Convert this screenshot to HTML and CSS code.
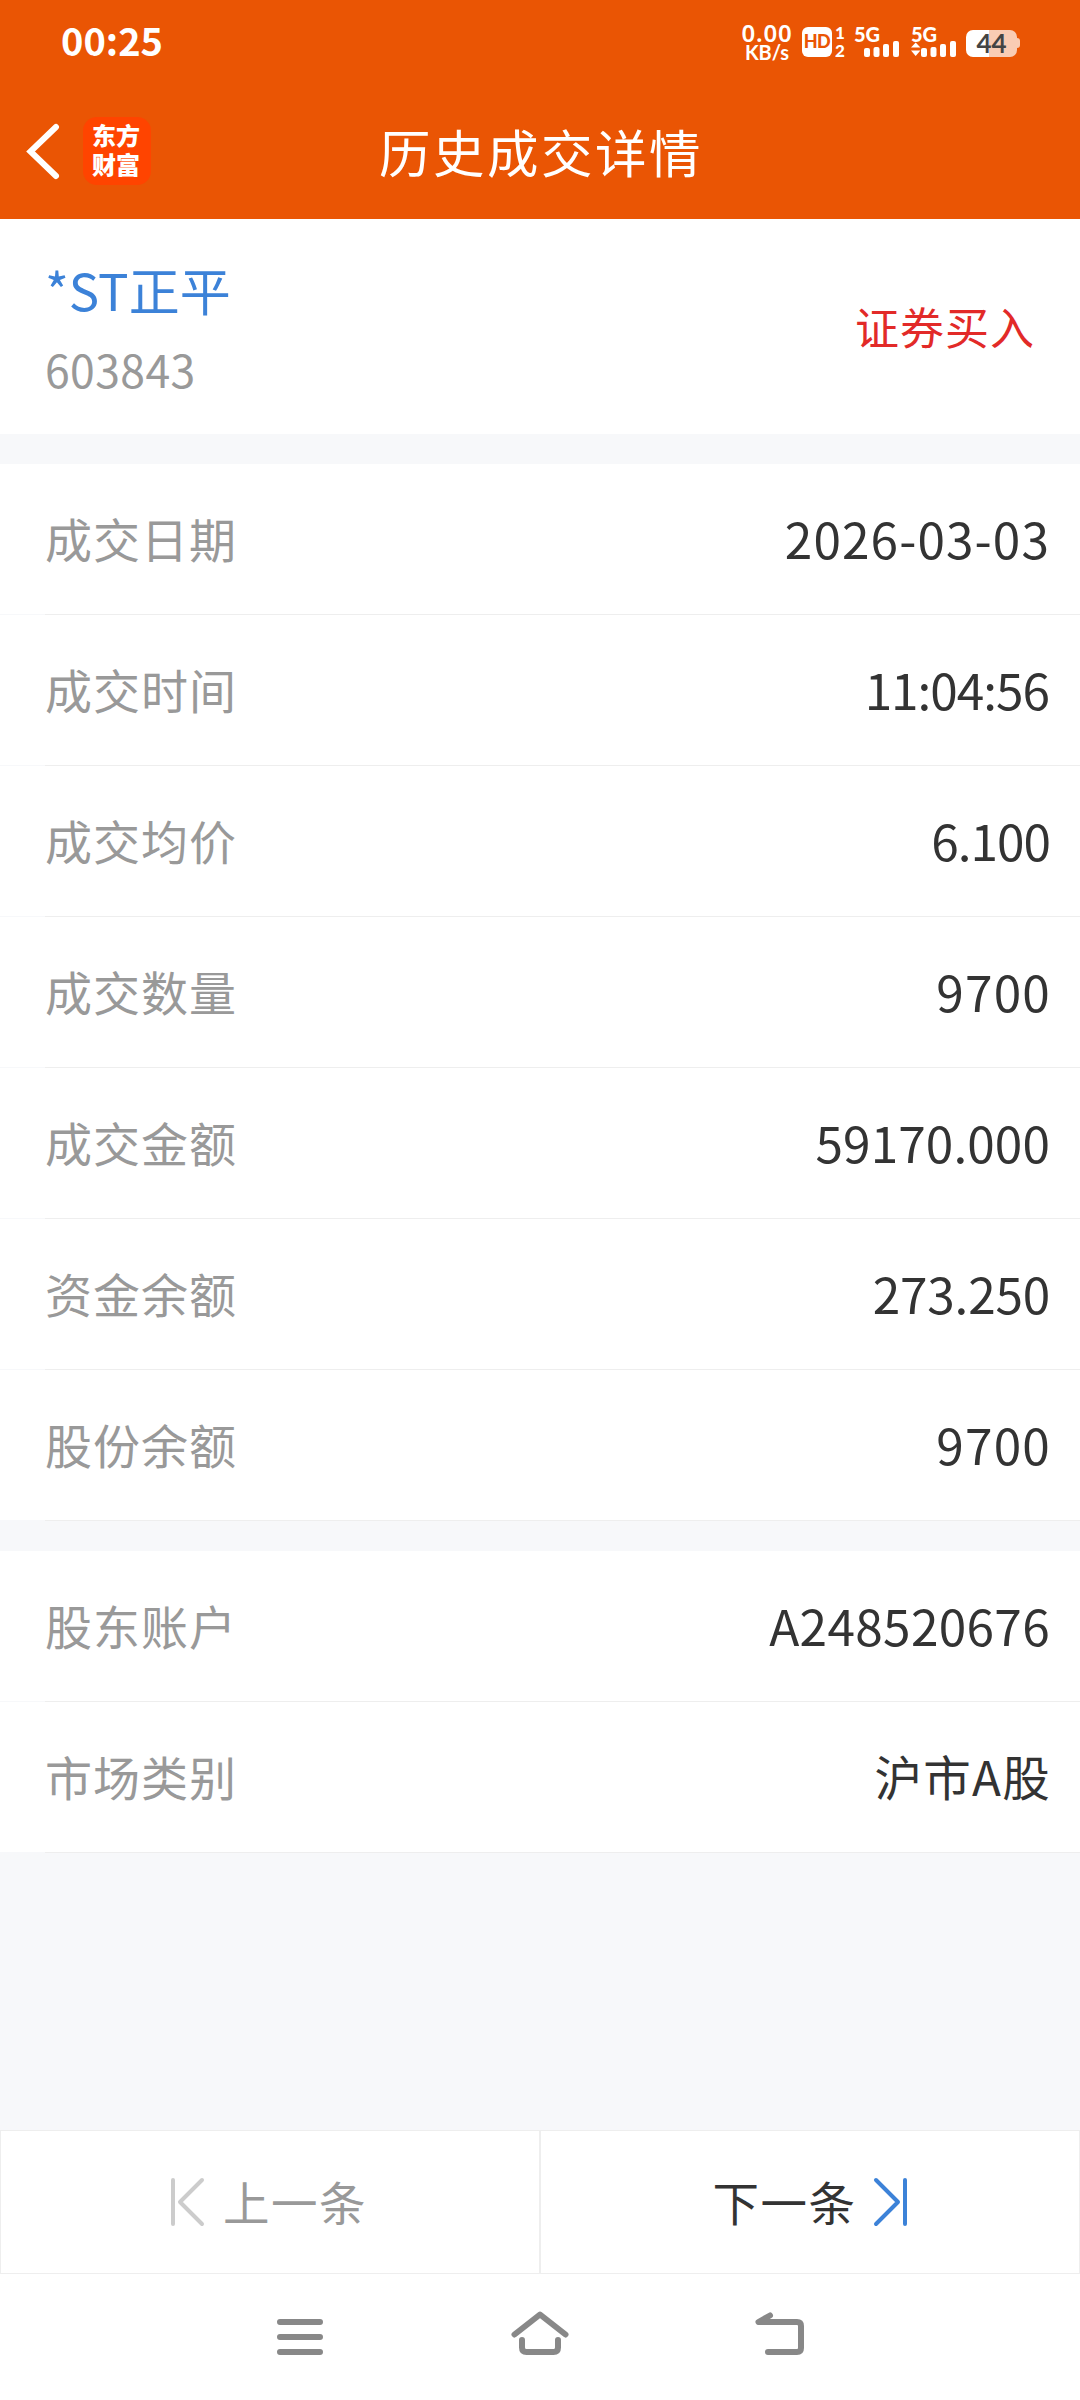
FILE: index.html
```html
<!DOCTYPE html>
<html lang="zh-CN">
<head>
<meta charset="UTF-8">
<title>历史成交详情</title>
<link rel="stylesheet" href="styles.css">
</head>
<body>
<div class="screen">
  <header class="header">
    <div class="status">
      <span class="clock">00:25</span>
      <div class="indicators">
        <div class="speed"><span class="speed-value">0.00</span><span class="speed-unit">KB/s</span></div>
        <div class="volte"><span class="hd">HD</span><span class="sims"><span>1</span><span>2</span></span></div>
        <div class="signal">
          <span class="net">5G</span>
          <svg class="bars" width="46" height="18" viewBox="0 0 46 18"><g fill="#fff"><rect x="10" y="9" width="6" height="9" rx="2"/><rect x="19.5" y="8" width="6" height="10" rx="2"/><rect x="29" y="5" width="6" height="13" rx="2"/><rect x="39" y="2" width="6" height="16" rx="2"/></g></svg>
        </div>
        <div class="signal">
          <span class="net">5G</span>
          <svg class="bars" width="46" height="18" viewBox="0 0 46 18"><g fill="#fff"><path d="M0 8.5 4.7 3.5 9.4 8.5ZM0 11.5H9.4L4.7 17Z"/><rect x="10" y="9" width="6" height="9" rx="2"/><rect x="19.5" y="8" width="6" height="10" rx="2"/><rect x="29" y="5" width="6" height="13" rx="2"/><rect x="39" y="2" width="6" height="16" rx="2"/></g></svg>
        </div>
        <div class="battery"><span class="level">44</span><span class="nub"></span></div>
      </div>
    </div>
    <div class="titlebar">
      <svg class="back" width="36" height="60" viewBox="0 0 36 60"><path d="M32 6 6.500 30.500 32 55" fill="none" stroke="#fff" stroke-width="6" stroke-linecap="round"/></svg>
      <div class="logo"><span>东方</span><span>财富</span></div>
      <h1 class="title">历史成交详情</h1>
    </div>
  </header>

  <section class="summary">
    <div class="stock"><span class="name">*ST正平</span><span class="code">603843</span></div>
    <span class="side">证券买入</span>
  </section>

  <section class="group">
    <div class="row"><span class="label">成交日期</span><span class="value date">2026-03-03</span></div>
    <div class="row"><span class="label">成交时间</span><span class="value time">11:04:56</span></div>
    <div class="row"><span class="label">成交均价</span><span class="value price">6.100</span></div>
    <div class="row"><span class="label">成交数量</span><span class="value count">9700</span></div>
    <div class="row"><span class="label">成交金额</span><span class="value amount">59170.000</span></div>
    <div class="row"><span class="label">资金余额</span><span class="value balance">273.250</span></div>
    <div class="row"><span class="label">股份余额</span><span class="value count">9700</span></div>
  </section>

  <section class="group">
    <div class="row"><span class="label">股东账户</span><span class="value account">A248520676</span></div>
    <div class="row"><span class="label">市场类别</span><span class="value market">沪市A股</span></div>
  </section>

  <div class="pager">
    <div class="page prev">
      <svg width="38" height="50" viewBox="0 0 38 50"><path d="M3 3V47M32 3 10 25 32 47" fill="none" stroke="#ccc" stroke-width="4" stroke-linecap="round" stroke-linejoin="round"/></svg>
      <span>上一条</span>
    </div>
    <div class="page next">
      <span>下一条</span>
      <svg width="38" height="50" viewBox="0 0 38 50"><path d="M6 3 28 25 6 47M35 3V47" fill="none" stroke="#3c82d8" stroke-width="4" stroke-linecap="round" stroke-linejoin="round"/></svg>
    </div>
  </div>

  <nav class="navbar">
    <svg width="60" height="60" viewBox="0 0 60 60"><path d="M10 25H50M10 40H50M10 55H50"/></svg>
    <svg width="60" height="60" viewBox="0 0 60 60"><path d="M4.500 37.500 30 17.500 55.500 37.500M12 43V50.500Q12 55 16.500 55H43.500Q48 55 48 50.500V43"/></svg>
    <svg width="60" height="60" viewBox="0 0 60 60"><path d="M20 18.500 8.500 25H47Q51 25 51 29V51Q51 55 47 55H18"/></svg>
  </nav>
</div>
</body>
</html>
```
FILE: styles.css
```css
* { box-sizing: border-box; }

body {
  margin: 0;
  background: #f7f8fa;
  font-family: "Noto Sans CJK SC", sans-serif;
}

.screen {
  display: flex;
  flex-direction: column;
  width: 1080px;
  height: 2400px;
}

.header {
  height: 219px;
  background: #ea5504;
  color: #fff;
}

.status {
  display: flex;
  justify-content: space-between;
  height: 84px;
  padding: 0 60px 0 61px;
}

.clock {
  font-size: 38px;
  font-weight: 700;
  line-height: 79px;
}

.indicators {
  display: flex;
  align-items: flex-start;
  padding-top: 20px;
  font-family: Lato, sans-serif;
}

.speed {
  display: flex;
  flex-direction: column;
  align-items: center;
  width: 54px;
  font-weight: 700;
}

.speed-value {
  font-family: "Noto Sans", sans-serif;
  font-weight: 600;
  font-size: 24px;
  line-height: 25px;
  letter-spacing: 0.800px;
}

.speed-unit { font-size: 20px; line-height: 15px; }

.volte {
  display: flex;
  gap: 2px;
  margin: 7px 0 0 8px;
}

.hd {
  width: 30px;
  height: 30px;
  border-radius: 6px;
  background: #fff;
  color: #ea5504;
  font-size: 18px;
  font-weight: 900;
  line-height: 29px;
  letter-spacing: -0.500px;
  text-align: center;
}

.sims {
  display: flex;
  flex-direction: column;
  gap: 3px;
  width: 12px;
  font-size: 17px;
  font-weight: 900;
  line-height: 15px;
  text-align: center;
}

.sims span:first-child { margin-top: -2px; }

.signal {
  display: flex;
  flex-direction: column;
  width: 46px;
  margin: 5px 0 0 8px;
}

.signal + .signal { margin-left: 11px; }

.net {
  font-size: 20px;
  font-weight: 900;
  line-height: 18px;
  height: 14px;
}

.battery {
  position: relative;
  width: 51px;
  height: 27px;
  margin: 10px 3px 0 9px;
  border-radius: 7px;
  background: linear-gradient(to right, #fff 23px, #f9ccb4 23px);
  color: #444;
  font-size: 26px;
  font-weight: 700;
  line-height: 27px;
  text-align: center;
}

.nub {
  position: absolute;
  left: 51px;
  top: 8px;
  width: 3px;
  height: 10px;
  border-radius: 0 3px 3px 0;
  background: #f9ccb4;
}

.titlebar {
  display: grid;
  grid-template-columns: 36px 91px 1fr 127px;
  align-items: center;
  height: 134px;
  padding-left: 24px;
}

.logo {
  display: flex;
  flex-direction: column;
  align-items: center;
  width: 68px;
  height: 68px;
  margin-left: 23px;
  padding: 3px 2px 0 0;
  border-radius: 14px;
  background: #ff4400;
  font-weight: 900;
  font-size: 24px;
  line-height: 29px;
}

.title {
  margin: -2px 0 0 -22px;
  font-size: 51.500px;
  font-weight: 400;
  letter-spacing: 2.500px;
  text-align: center;
}

.summary {
  display: flex;
  justify-content: space-between;
  align-items: center;
  height: 215px;
  padding: 0 45px;
  background: #fff;
}

.stock {
  display: flex;
  flex-direction: column;
  padding-top: 4px;
}

.name {
  color: #3c82d8;
  font-size: 51px;
  line-height: 80px;
}

.code {
  color: #999;
  font-size: 44.500px;
  line-height: 80px;
  letter-spacing: 0.400px;
}

.side {
  margin-top: -2px;
  color: #e22a28;
  font-size: 44px;
  letter-spacing: 1px;
}

.group {
  display: flex;
  flex-direction: column;
  margin-top: 30px;
}

.row {
  display: flex;
  justify-content: space-between;
  align-items: center;
  height: 151px;
  padding: 0 30px 0 45px;
  background: linear-gradient(#eee, #eee) 45px 100% / 100% 1px no-repeat, linear-gradient(#fff, #fff) 0 0 / 100% 150px no-repeat;
}

.label {
  padding-bottom: 5px;
  color: #999;
  font-size: 47px;
  letter-spacing: 1px;
}

.value {
  padding-bottom: 4px;
  color: #333;
  font-size: 49.500px;
}

.date { letter-spacing: 1.100px; }
.time { margin-right: 1px; letter-spacing: -1px; }
.price { letter-spacing: -1px; }
.count { margin-right: -1px; letter-spacing: 1.200px; }
.amount { letter-spacing: 0.100px; }
.balance { letter-spacing: -0.200px; }
.account { letter-spacing: 0.350px; }

.market {
  padding-bottom: 5px;
  margin-right: -1px;
  font-size: 47.500px;
  letter-spacing: 1.300px;
}

.pager {
  display: grid;
  grid-template-columns: 1fr 1fr;
  height: 144px;
  margin-top: auto;
  border-bottom: 1px solid #eee;
}

.page {
  display: flex;
  justify-content: center;
  align-items: center;
  gap: 15px;
  background: #fff;
  border: 1px solid #eee;
  border-bottom: 0;
  font-size: 46.500px;
  letter-spacing: 1.500px;
}

.page span { padding-bottom: 4px; }

.prev {
  padding-right: 3px;
  color: #999;
}

.next {
  gap: 13px;
  color: #333;
}

.navbar {
  display: flex;
  justify-content: center;
  gap: 180px;
  height: 126px;
  padding-top: 23px;
  background: #fff;
}

.navbar path {
  fill: none;
  stroke: #888;
  stroke-width: 6;
  stroke-linecap: round;
  stroke-linejoin: round;
}
```
